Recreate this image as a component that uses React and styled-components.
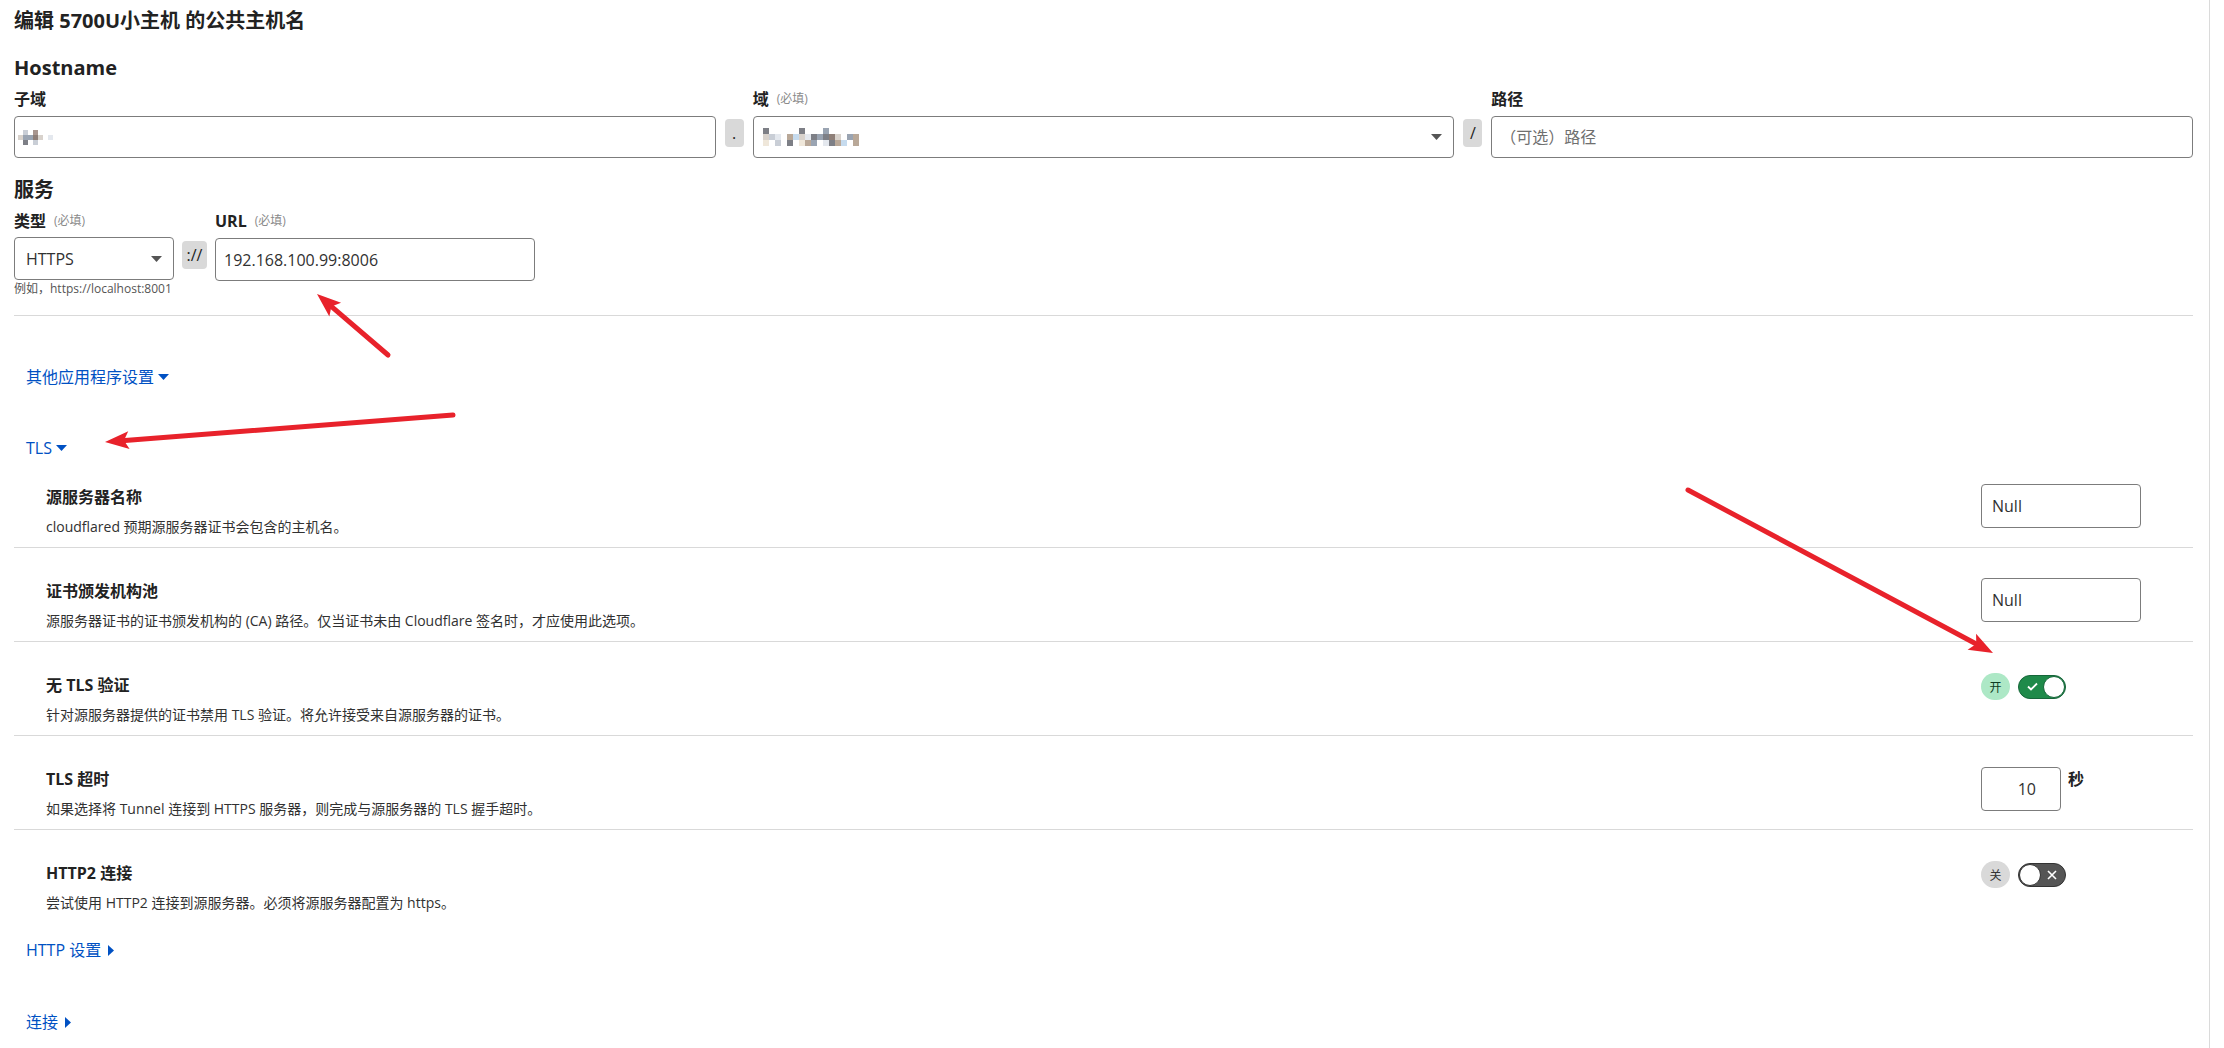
import styled, { createGlobalStyle } from 'styled-components';

const GlobalStyle = createGlobalStyle`
  html, body {
    margin: 0;
    padding: 0;
    background: #ffffff;
  }
  body {
    font-family: "Open Sans", "Noto Sans CJK SC", sans-serif;
    color: #313131;
  }
  * {
    box-sizing: border-box;
  }
`;

const tlsRows = [
  { title: '源服务器名称', desc: 'cloudflared 预期源服务器证书会包含的主机名。', kind: 'text', value: 'Null' },
  { title: '证书颁发机构池', desc: '源服务器证书的证书颁发机构的 (CA) 路径。仅当证书未由 Cloudflare 签名时，才应使用此选项。', kind: 'text', value: 'Null' },
  { title: '无 TLS 验证', desc: '针对源服务器提供的证书禁用 TLS 验证。将允许接受来自源服务器的证书。', kind: 'switch', on: true },
  { title: 'TLS 超时', desc: '如果选择将 Tunnel 连接到 HTTPS 服务器，则完成与源服务器的 TLS 握手超时。', kind: 'number', value: '10' },
  { title: 'HTTP2 连接', desc: '尝试使用 HTTP2 连接到源服务器。必须将源服务器配置为 https。', kind: 'switch', on: false },
];

const arrows = [
  { from: [388, 355], to: [317, 294] },
  { from: [453, 415], to: [105, 442] },
  { from: [1688, 490], to: [1993, 653] },
];

const palette = {
  a: '#c9ced6', b: '#9aa4b2', c: '#a8968f', d: '#7d7f86', e: '#d8d2cc',
  f: '#c6dbee', g: '#b9a898', h: '#efe7da', i: '#8e7f78', j: '#e4e8ee',
};

const subMosaic = ['.a.c...', 'ebbie.j', '.d.a...'];
const domainMosaic = [
  'd.....d...b.....',
  'eaj.gfejdbdie.bg',
  'h.a.d.hgb.jdgf.g',
];

function Mosaic({ rows, cell }){
  const w = rows[0].length * cell;
  const h = rows.length * cell;
  return(
    <svg width={w} height={h} viewBox={`0 0 ${w} ${h}`}>
      {rows.map((row, y) => row.split('').map((ch, x) => (
        palette[ch] ? <rect key={`${x}-${y}`} x={x * cell} y={y * cell} width={cell} height={cell} fill={palette[ch]} /> : null
      )))}
    </svg>
  );
}

function Caret({ dir, color }){
  if(dir === 'right'){
    return <svg width="6" height="11" viewBox="0 0 6 11"><polygon points="0,0 6,5.5 0,11" fill={color} /></svg>;
  }
  return <svg width="11" height="6" viewBox="0 0 11 6"><polygon points="0,0 11,0 5.5,6" fill={color} /></svg>;
}

function Arrow({ from, to }){
  const dx = to[0] - from[0];
  const dy = to[1] - from[1];
  const len = Math.hypot(dx, dy);
  const ux = dx / len;
  const uy = dy / len;
  const bx = to[0] - ux * 24;
  const by = to[1] - uy * 24;
  const nx = -uy * 9;
  const ny = ux * 9;
  const head = `${to[0]},${to[1]} ${bx + nx},${by + ny} ${bx + ux * 5},${by + uy * 5} ${bx - nx},${by - ny}`;
  return(
    <g>
      <line x1={from[0]} y1={from[1]} x2={bx + ux * 4} y2={by + uy * 4} stroke="#e8222b" strokeWidth="5" strokeLinecap="round" />
      <polygon points={head} fill="#e8222b" />
    </g>
  );
}

function Toggle({ on }){
  return(
    <SwitchWrap>
      <Badge $on={on}>{on ? '开' : '关'}</Badge>
      <Switch $on={on}>
        {on ? (
          <>
            <svg width="11" height="9" viewBox="0 0 11 9"><path d="M1 4.5 L4 7.5 L10 1.5" stroke="#fff" strokeWidth="1.8" fill="none" /></svg>
            <Knob $on={on} />
          </>
        ) : (
          <>
            <Knob $on={on} />
            <svg width="10" height="10" viewBox="0 0 10 10"><path d="M1 1 L9 9 M9 1 L1 9" stroke="#fff" strokeWidth="1.6" /></svg>
          </>
        )}
      </Switch>
    </SwitchWrap>
  );
}

export default function App(){
  return(
    <Page>
      <GlobalStyle />
      <Title>编辑 5700U小主机 的公共主机名</Title>

      <Heading $top={19}>Hostname</Heading>
      <HostRow>
        <Field>
          <Label>子域</Label>
          <FakeInput><Mosaic rows={subMosaic} cell={5} /></FakeInput>
        </Field>
        <Sep>.</Sep>
        <Field>
          <Label>域<Required>(必填)</Required></Label>
          <FakeInput $pad={9}>
            <Mosaic rows={domainMosaic} cell={6} />
            <Caret color="#555" />
          </FakeInput>
        </Field>
        <Sep>/</Sep>
        <Field>
          <Label>路径</Label>
          <TextInput placeholder="（可选）路径" />
        </Field>
      </HostRow>

      <Heading $top={18}>服务</Heading>
      <ServiceRow>
        <ServiceCol $w={160}>
          <Label>类型<Required>(必填)</Required></Label>
          <SelectBox>
            HTTPS
            <Caret color="#555" />
          </SelectBox>
          <Hint>例如，https://localhost:8001</Hint>
        </ServiceCol>
        <SchemeSep>://</SchemeSep>
        <ServiceCol $w={320}>
          <Label>URL<Required>(必填)</Required></Label>
          <TextInput $h={43} defaultValue="192.168.100.99:8006" />
        </ServiceCol>
      </ServiceRow>

      <Divider />

      <Disclosure $top={49}>其他应用程序设置<Caret color="#0051c3" /></Disclosure>
      <Disclosure $top={47}>TLS<Caret color="#0051c3" /></Disclosure>

      <Rows>
        {tlsRows.map((row) => (
          <Row key={row.title}>
            <div>
              <RowTitle>{row.title}</RowTitle>
              <RowDesc>{row.desc}</RowDesc>
            </div>
            <Control>
              {row.kind === 'text' && <SmallInput defaultValue={row.value} />}
              {row.kind === 'number' && (
                <>
                  <NumberInput defaultValue={row.value} />
                  <Unit>秒</Unit>
                </>
              )}
              {row.kind === 'switch' && <Toggle on={row.on} />}
            </Control>
          </Row>
        ))}
      </Rows>

      <Disclosure $top={15} $gap={7}>HTTP 设置<Caret dir="right" color="#0051c3" /></Disclosure>
      <Disclosure $top={48} $gap={7}>连接<Caret dir="right" color="#0051c3" /></Disclosure>

      <Annotations width="2224" height="1048" viewBox="0 0 2224 1048">
        {arrows.map((a, i) => <Arrow key={i} from={a.from} to={a.to} />)}
      </Annotations>
    </Page>
  );
}

const Page = styled.div`
  position: relative;
  width: 2210px;
  min-height: 100vh;
  padding: 7px 16px 0 14px;
  border-right: 1px solid #dadada;
`;

const Title = styled.h1`
  margin: 0;
  font-size: 20px;
  line-height: 28px;
  font-weight: 700;
  color: #222;
`;

const Heading = styled.h2`
  margin: ${p => p.$top}px 0 0;
  font-size: 20px;
  line-height: 28px;
  font-weight: 700;
  color: #222;
`;

const HostRow = styled.div`
  display: flex;
  gap: 9px;
`;

const Field = styled.div`
  flex: 1;
  display: flex;
  flex-direction: column;
`;

const Label = styled.div`
  margin: 6px 0 6px;
  font-size: 16px;
  line-height: 22px;
  font-weight: 700;
  color: #222;
  display: flex;
  align-items: center;
`;

const Required = styled.span`
  margin-left: 8px;
  font-size: 12px;
  font-weight: 400;
  color: #8a8a8a;
`;

const boxStyle = `
  border: 1px solid #7c7c7c;
  border-radius: 4px;
  background: #fff;
  font-family: inherit;
  font-size: 16px;
  color: #313131;
`;

const FakeInput = styled.div`
  ${boxStyle}
  height: 42px;
  display: flex;
  align-items: center;
  justify-content: space-between;
  padding: 0 11px 0 ${p => p.$pad || 3}px;
`;

const TextInput = styled.input`
  ${boxStyle}
  width: 100%;
  height: ${p => p.$h || 42}px;
  padding: 0 8px;
  outline: none;
  &::placeholder {
    color: #6f6f6f;
  }
`;

const Sep = styled.div`
  align-self: flex-end;
  margin-bottom: 11px;
  width: 19px;
  height: 28px;
  border-radius: 4px;
  background: #d9d9d9;
  display: flex;
  align-items: center;
  justify-content: center;
  font-size: 16px;
  color: #222;
`;

const ServiceRow = styled.div`
  display: flex;
  align-items: flex-start;
  gap: 8px;
`;

const ServiceCol = styled.div`
  width: ${p => p.$w}px;
  display: flex;
  flex-direction: column;
`;

const SelectBox = styled.div`
  ${boxStyle}
  margin-top: -1px;
  height: 43px;
  display: flex;
  align-items: center;
  justify-content: space-between;
  padding: 0 11px 0 11px;
`;

const SchemeSep = styled.div`
  margin-top: 37px;
  width: 25px;
  height: 28px;
  border-radius: 4px;
  background: #d9d9d9;
  display: flex;
  align-items: center;
  justify-content: center;
  font-size: 16px;
  color: #222;
`;

const Hint = styled.div`
  margin-top: 1px;
  font-size: 12px;
  line-height: 16px;
  color: #555;
  white-space: nowrap;
`;

const Divider = styled.hr`
  margin: 18px 0 0;
  border: none;
  border-top: 1px solid #d9d9d9;
`;

const Disclosure = styled.div`
  margin-top: ${p => p.$top}px;
  margin-left: 12px;
  display: flex;
  align-items: center;
  gap: ${p => p.$gap || 4}px;
  font-size: 16px;
  line-height: 24px;
  color: #0051c3;
`;

const Rows = styled.div`
  display: flex;
  flex-direction: column;
`;

const Row = styled.div`
  display: grid;
  grid-template-columns: 1fr 212px;
  padding: 31px 0 10px 32px;
  border-bottom: 1px solid #d9d9d9;

  &:first-child {
    padding-top: 25px;
  }
  &:last-child {
    border-bottom: none;
  }
`;

const RowTitle = styled.div`
  font-size: 16px;
  line-height: 24px;
  font-weight: 700;
  color: #222;
`;

const RowDesc = styled.div`
  margin-top: 8px;
  font-size: 14px;
  line-height: 20px;
  color: #313131;
`;

const Control = styled.div`
  display: flex;
  align-items: flex-start;
  gap: 7px;
`;

const SmallInput = styled.input`
  ${boxStyle}
  margin-top: -1px;
  width: 160px;
  height: 44px;
  padding: 0 10px;
  outline: none;
`;

const NumberInput = styled.input`
  ${boxStyle}
  width: 80px;
  height: 44px;
  padding: 0 24px 0 8px;
  text-align: right;
  outline: none;
`;

const Unit = styled.span`
  font-size: 16px;
  line-height: 24px;
  font-weight: 700;
  color: #222;
`;

const SwitchWrap = styled.div`
  display: flex;
  align-items: center;
  gap: 8px;
`;

const Badge = styled.span`
  width: 29px;
  height: 27px;
  border-radius: 14px;
  display: flex;
  align-items: center;
  justify-content: center;
  font-size: 12px;
  color: ${p => p.$on ? '#0d3b22' : '#333'};
  background: ${p => p.$on ? '#ade8c6' : '#d9d9d9'};
`;

const Switch = styled.span`
  width: 48px;
  height: 24px;
  border-radius: 12px;
  border: 1px solid ${p => p.$on ? '#16663a' : '#333'};
  background: ${p => p.$on ? '#1f8a4a' : '#555'};
  display: flex;
  align-items: center;
  justify-content: space-between;
  padding: ${p => p.$on ? '0 0 0 8px' : '0 8px 0 0'};
`;

const Knob = styled.span`
  width: 22px;
  height: 22px;
  border-radius: 50%;
  background: #fff;
  border: 1px solid ${p => p.$on ? '#16663a' : '#333'};
`;

const Annotations = styled.svg`
  position: absolute;
  top: 0;
  left: 0;
  pointer-events: none;
`;
